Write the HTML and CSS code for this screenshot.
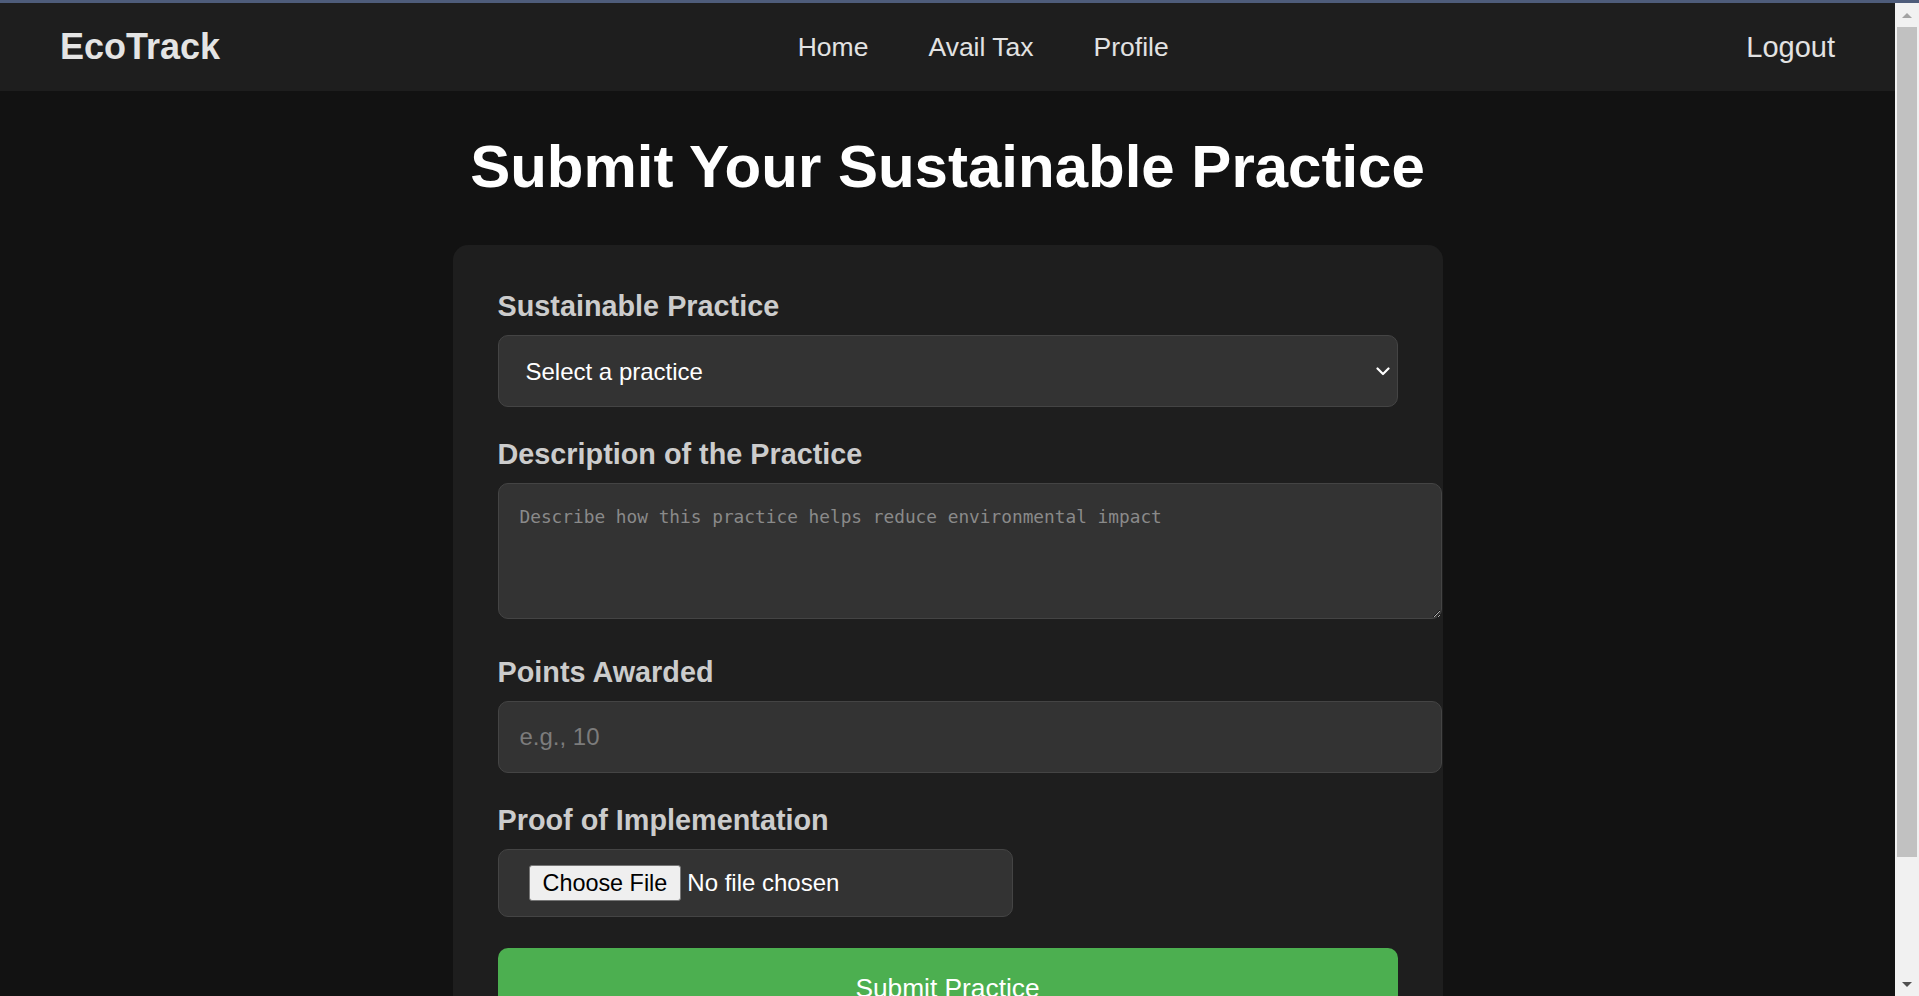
FILE: index.html
```html
<!DOCTYPE html>
<html lang="en">
<head>
<meta charset="utf-8">
<title>EcoTrack - Submit Practice</title>
<link rel="stylesheet" href="styles.css">
</head>
<body>
<nav class="navbar">
  <a class="logo" href="#">EcoTrack</a>
  <ul class="nav-links">
    <li><a href="#">Home</a></li>
    <li><a href="#">Avail Tax</a></li>
    <li><a href="#">Profile</a></li>
  </ul>
  <a class="logout" href="#">Logout</a>
</nav>

<main class="container">
  <h1 class="page-title">Submit Your Sustainable Practice</h1>
  <form class="card">
    <div class="field">
      <label class="field-label" for="practice">Sustainable Practice</label>
      <div class="select-wrap">
        <select id="practice" class="control select">
          <option>Select a practice</option>
          <option>Solar Energy</option>
          <option>Rainwater Harvesting</option>
          <option>Composting</option>
        </select>
        <svg class="chevron" width="14" height="9" viewBox="0 0 14 9" aria-hidden="true"><path d="M1.5 1.5 L7 7 L12.5 1.5" fill="none" stroke="#ffffff" stroke-width="2.2" stroke-linecap="round" stroke-linejoin="round"/></svg>
      </div>
    </div>
    <div class="field">
      <label class="field-label" for="desc">Description of the Practice</label>
      <textarea id="desc" class="control textarea" placeholder="Describe how this practice helps reduce environmental impact"></textarea>
    </div>
    <div class="field">
      <label class="field-label" for="points">Points Awarded</label>
      <input id="points" class="control input" type="number" placeholder="e.g., 10">
    </div>
    <div class="field">
      <label class="field-label" for="proof">Proof of Implementation</label>
      <input id="proof" class="file" type="file">
    </div>
    <button type="submit" class="submit">Submit Practice</button>
  </form>
</main>

<div class="scrollbar" aria-hidden="true">
  <div class="sb-btn"><span class="tri tri-up"></span></div>
  <div class="sb-thumb"></div>
  <div class="sb-track"></div>
  <div class="sb-btn"><span class="tri tri-down"></span></div>
</div>
</body>
</html>
```
FILE: styles.css
```css
html {
  overflow: hidden;
  background: #121212;
  border-top: 3px solid #4e5c7a;
}

body {
  margin: 0 24px 0 0;
  background: #121212;
  color: #ffffff;
  font-family: "Liberation Sans", Arial, sans-serif;
}

/* Navbar */
.navbar {
  display: flex;
  justify-content: space-between;
  align-items: center;
  height: 88px;
  padding: 0 60px;
  background: #1e1e1e;
}

.logo {
  font-size: 36px;
  font-weight: bold;
  color: #e4e4e4;
  text-decoration: none;
}

.nav-links {
  display: flex;
  gap: 60px;
  list-style: none;
  margin: 0;
  padding: 0;
}

.nav-links a {
  font-size: 26.5px;
  color: #e2e2e2;
  text-decoration: none;
}

.logout {
  font-size: 29px;
  color: #e2e2e2;
  text-decoration: none;
}

/* Main */
.container {
  display: flex;
  flex-direction: column;
  align-items: center;
}

.page-title {
  margin: 41px 0 44px;
  font-size: 60px;
  line-height: 69px;
  font-weight: bold;
  color: #ffffff;
  text-align: center;
}

.card {
  box-sizing: border-box;
  width: 990px;
  padding: 45px;
  background: #1e1e1e;
  border-radius: 15px;
}

.field {
  display: flow-root;
  margin-bottom: 31px;
}

.field-label {
  display: block;
  margin-bottom: 12px;
  font-size: 28.8px;
  font-weight: bold;
  color: #cccccc;
}

.control {
  background: #333333;
  border: 1px solid #444444;
  border-radius: 10px;
  color: #ffffff;
  font-family: "Liberation Sans", Arial, sans-serif;
  font-size: 24px;
  outline: none;
}

.control::placeholder {
  color: #7c7c7c;
  opacity: 1;
}

.select-wrap {
  position: relative;
  width: 900px;
}

.select {
  display: block;
  box-sizing: border-box;
  width: 100%;
  height: 72px;
  padding: 0 27px;
  appearance: none;
  -webkit-appearance: none;
}

.chevron {
  position: absolute;
  right: 8px;
  top: 32px;
}

.textarea {
  display: block;
  width: 900px;
  height: 92px;
  padding: 22px 21px 20px;
  margin-bottom: 6px;
  font-family: "DejaVu Sans Mono", "Liberation Mono", monospace;
  font-size: 17.8px;
  resize: vertical;
}

.textarea::placeholder {
  color: #8a8a8a;
}

.input {
  display: block;
  width: 900px;
  height: 30px;
  padding: 20px 21px;
}

.file {
  display: block;
  box-sizing: border-box;
  width: 515px;
  height: 68px;
  padding: 15px 31px 15px 30px;
  background: #333333;
  border: 1px solid #444444;
  border-radius: 10px;
  color: #ffffff;
  font-family: "Liberation Sans", Arial, sans-serif;
  font-size: 24px;
}

.file::file-selector-button {
  height: 36px;
  margin-right: 6px;
  padding: 0 13px;
  background: #efefef;
  border: 1px solid #767676;
  border-radius: 3px;
  color: #000000;
  font-family: "Liberation Sans", Arial, sans-serif;
  font-size: 23.4px;
}

.submit {
  display: block;
  width: 900px;
  padding: 25px;
  background: #4caf50;
  border: none;
  border-radius: 10px;
  color: #ffffff;
  font-family: "Liberation Sans", Arial, sans-serif;
  font-size: 26.3px;
  cursor: pointer;
}

/* Window scrollbar (screenshot chrome) */
.scrollbar {
  position: fixed;
  top: 3px;
  right: 0;
  bottom: 0;
  width: 24px;
  display: flex;
  flex-direction: column;
  background: #f1f1f1;
}

.sb-btn {
  flex: none;
  height: 24px;
  display: flex;
  align-items: center;
  justify-content: center;
}

.tri {
  width: 0;
  height: 0;
  border-left: 5px solid transparent;
  border-right: 5px solid transparent;
}

.tri-up {
  border-bottom: 5px solid #a3a3a3;
}

.tri-down {
  border-top: 5px solid #505050;
}

.sb-thumb {
  flex: none;
  height: 830px;
  margin: 0 2px 0 2px;
  background: #c1c1c1;
}

.sb-track {
  flex: 1;
}
```
